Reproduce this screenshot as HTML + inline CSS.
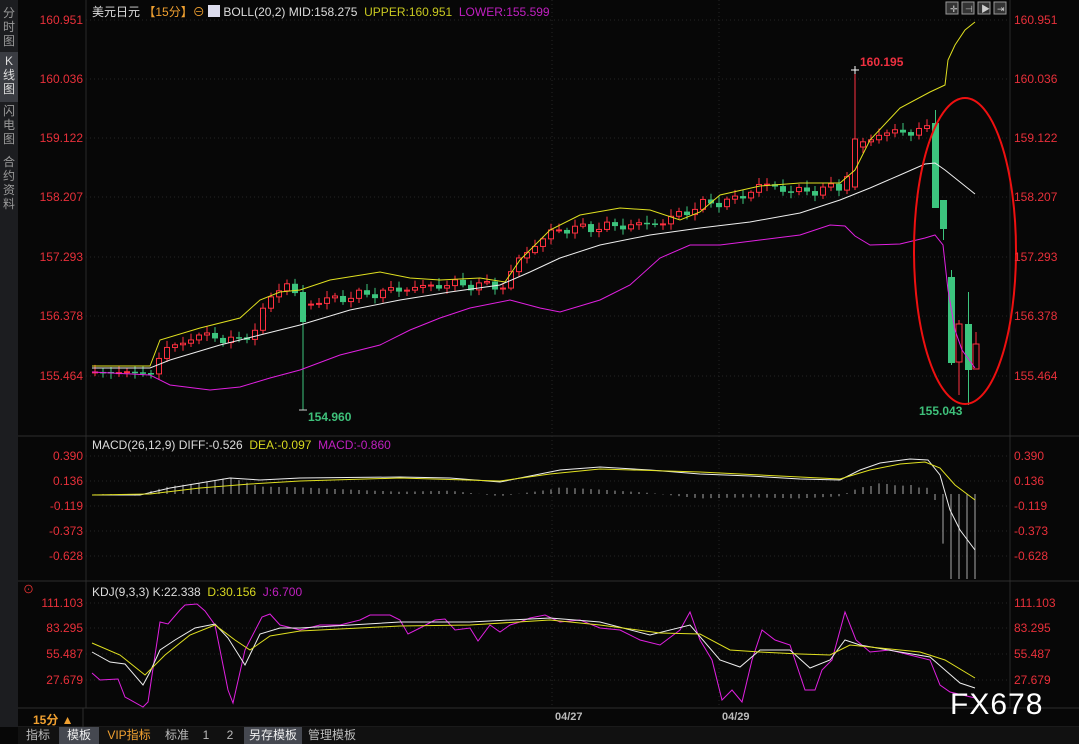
<!DOCTYPE html>
<html><head><meta charset="utf-8"><style>
html,body{margin:0;padding:0;background:#070707;width:1079px;height:744px;overflow:hidden;font-family:"Liberation Sans","Noto Sans CJK SC",sans-serif}
#wrap{position:relative;width:1079px;height:744px}
.side{position:absolute;left:0;top:0;width:18px;height:727px;background:#1c1d20}
.vt{position:absolute;left:0;width:18px;color:#9a9a9a;font-size:12px;line-height:14px;text-align:center}
.lab{position:absolute;font-size:12px;color:#e8303a}
.lab.l{right:996px;text-align:right}
.lab.r{left:1014px}
.t{position:absolute;font-size:12px;white-space:nowrap}
.tabs{position:absolute;left:18px;top:727px;height:17px;width:1061px;background:#111}
.tab{position:absolute;top:0;height:17px;font-size:12px;line-height:17px;color:#bbb;text-align:center}
</style></head><body><div id="wrap">
<svg id="s" width="1079" height="744" style="position:absolute;left:0;top:0"></svg>
<div class="side"></div>
<div class="vt" style="top:6px">分<br>时<br>图</div>
<div class="vt" style="top:52px;background:#3a3c42;color:#ddd;height:48px;padding-top:2px">K<br>线<br>图</div>
<div class="vt" style="top:104px">闪<br>电<br>图</div>
<div class="vt" style="top:155px">合<br>约<br>资<br>料</div>

<div class="t" style="left:92px;top:3px;color:#ddd">美元日元 <span style="color:#f0a030">【15分】</span><span style="color:#f0a030">⊖</span> <span style="display:inline-block;width:12px;height:12px;background:#dde;vertical-align:-1px"></span> BOLL(20,2) MID:158.275 &nbsp;<span style="color:#c8c820">UPPER:160.951</span> &nbsp;<span style="color:#c020c0">LOWER:155.599</span></div>
<div class="t" style="left:92px;top:438px;color:#ddd">MACD(26,12,9) DIFF:-0.526 &nbsp;<span style="color:#d8d820">DEA:-0.097</span> &nbsp;<span style="color:#c020c0">MACD:-0.860</span></div>
<div class="t" style="left:92px;top:585px;color:#ddd">KDJ(9,3,3) K:22.338 &nbsp;<span style="color:#d8d820">D:30.156</span> &nbsp;<span style="color:#c020c0">J:6.700</span></div>
<div class="t" style="left:23px;top:581px;color:#e33;font-size:11px">⊙</div>

<div class="t" style="left:860px;top:55px;color:#ee3040;font-weight:bold">160.195</div>
<div class="t" style="left:308px;top:410px;color:#3ec07a;font-weight:bold">154.960</div>
<div class="t" style="left:919px;top:404px;color:#3ec07a;font-weight:bold">155.043</div>

<div class="t" style="left:555px;top:711px;color:#bbb;font-weight:bold;font-size:11px">04/27</div>
<div class="t" style="left:722px;top:711px;color:#bbb;font-weight:bold;font-size:11px">04/29</div>
<div class="t" style="left:33px;top:711px;color:#f0a030;font-weight:bold">15分 ▲</div>
<div class="t" style="left:950px;top:688px;color:#fff;font-size:30px;letter-spacing:1px">FX678</div>

<div class="tabs">
<div class="tab" style="left:0;width:40px">指标</div>
<div class="tab" style="left:41px;width:40px;background:#454850;color:#eee">模板</div>
<div class="tab" style="left:82px;width:58px;color:#f0a030">VIP指标</div>
<div class="tab" style="left:141px;width:36px">标准</div>
<div class="tab" style="left:178px;width:20px">1</div>
<div class="tab" style="left:199px;width:26px">2</div>
<div class="tab" style="left:226px;width:58px;background:#454850;color:#eee">另存模板</div>
<div class="tab" style="left:285px;width:58px">管理模板</div>
</div>
<div id="labs"></div>
</div>
<script>
var S=document.getElementById('s'),h='';
function L(a,c,w,d){h+='<polyline fill="none" stroke="'+c+'" stroke-width="'+(w||1)+'"'+(d?' stroke-dasharray="'+d+'"':'')+' points="'+a.map(p=>p.join(',')).join(' ')+'"/>';}
function R(x,y,w,hh,f,s){h+='<rect x="'+x+'" y="'+y+'" width="'+w+'" height="'+hh+'" fill="'+f+'"'+(s?' stroke="'+s+'"':'')+'/>';}
R(86,0,924,727,'#070707');
L([[86,0],[86,708]],'#2a2a2a');L([[1010,0],[1010,708]],'#2a2a2a');
L([[18,436],[1079,436]],'#2e2e2e');L([[18,581],[1079,581]],'#2e2e2e');L([[18,708],[1079,708]],'#2e2e2e');L([[18,727],[1079,727]],'#2e2e2e');
L([[83,708],[83,727]],'#2e2e2e');
var labs='',mains=[[160.951,20],[160.036,79],[159.122,138],[158.207,197],[157.293,257],[156.378,316],[155.464,376]];
mains.forEach(m=>{L([[86,m[1]],[1010,m[1]]],'#262626',1,'1,3');labs+='<div class="lab l" style="top:'+(m[1]-7)+'px">'+m[0].toFixed(3)+'</div><div class="lab r" style="top:'+(m[1]-7)+'px">'+m[0].toFixed(3)+'</div>';});
[[0.390,456],[0.136,481],[-0.119,506],[-0.373,531],[-0.628,556]].forEach(m=>{L([[86,m[1]],[1010,m[1]]],'#262626',1,'1,3');labs+='<div class="lab l" style="top:'+(m[1]-7)+'px">'+m[0].toFixed(3)+'</div><div class="lab r" style="top:'+(m[1]-7)+'px">'+m[0].toFixed(3)+'</div>';});
[[111.103,603],[83.295,628],[55.487,654],[27.679,680]].forEach(m=>{L([[86,m[1]],[1010,m[1]]],'#262626',1,'1,3');labs+='<div class="lab l" style="top:'+(m[1]-7)+'px">'+m[0].toFixed(3)+'</div><div class="lab r" style="top:'+(m[1]-7)+'px">'+m[0].toFixed(3)+'</div>';});
[552,719].forEach(x=>L([[x,0],[x,708]],'#262626',1,'1,3'));
document.getElementById('labs').innerHTML=labs;
var Y=p=>20+(160.951-p)*64.88;
var kf=[[92,155.52],[150,155.52],[158,155.75],[170,155.9],[200,156.1],[240,156.0],[255,156.2],[275,156.8],[290,156.9],[300,156.55],[320,156.62],[400,156.8],[450,156.88],[505,156.85],[520,157.3],[555,157.72],[600,157.76],[660,157.82],[700,158.1],[740,158.2],[760,158.42],[800,158.3],[840,158.38],[848,158.6],[856,159.0],[880,159.2],[928,159.26]];
function I(x){for(var i=1;i<kf.length;i++)if(x<=kf[i][0]){var a=kf[i-1],b=kf[i];return a[1]+(b[1]-a[1])*(x-a[0])/(b[0]-a[0]);}return kf[kf.length-1][1];}
var prev=I(92),G='#3cc57e',RD='#ff3040';
for(var x=95;x<=927;x+=8){
 var c=I(x)+0.05*Math.sin(x*1.37)+0.03*Math.sin(x*0.53);
 if(x<150)c=155.52+0.01*Math.sin(x);
 var o=prev,up=c>=o,t=Math.min(Y(o),Y(c)),b=Math.max(Y(o),Y(c));if(b-t<1)b=t+1;
 var hi=t-2-Math.abs(Math.sin(x*2.1))*5,lo=b+2+Math.abs(Math.cos(x*1.7))*4;
 var col=up?RD:G;
 L([[x,hi],[x,lo]],col);
 if(up){R(x-2.5,t,5,b-t,'#070707',col);}else R(x-3,t,6,b-t+0.5,col);
 prev=c;
}
L([[303,285],[303,410]],G);R(300,292,6,30,G);L([[299,410],[307,410]],'#ccc');
L([[855,70],[855,190]],RD);R(852.5,139,5,48,'#070707',RD);L([[851,70],[859,70]],'#fff');L([[855,66],[855,74]],'#fff');
[[935.5,110,123,208,208,G],[943.5,200,200,229,240,G],[951.5,270,277,363,365,G],[959,320,324,362,395,RD],[968.5,292,324,370,405,G],[976,332,344,369,369,RD]].forEach(k=>{L([[k[0],k[1]],[k[0],k[4]]],k[5]);if(k[5]==G)R(k[0]-3.5,k[2],7,k[3]-k[2],G);else R(k[0]-3,k[2],6,k[3]-k[2],'#070707',RD);});
L([[92,366],[150,366],[160,340],[200,328],[240,318],[260,300],[280,292],[300,290],[330,280],[380,272],[410,278],[440,280],[480,278],[505,282],[520,260],[550,230],[580,215],[620,208],[650,210],[680,220],[700,212],[720,195],[760,186],[800,183],[840,183],[855,170],[870,140],[900,108],[930,92],[945,85],[948,60],[955,45],[965,30],[975,22]],'#e0e020');
L([[92,368],[150,368],[170,360],[220,345],[260,335],[300,325],[350,310],[400,300],[450,292],[500,285],[530,272],[560,258],[600,245],[650,235],[700,228],[750,222],[800,213],[840,200],[870,188],[900,175],[925,164],[935,163],[945,170],[960,182],[975,194]],'#eee');
L([[92,372],[150,375],[170,385],[210,390],[240,387],[270,378],[300,370],[340,355],[380,345],[410,330],[440,318],[470,308],[510,300],[540,308],[560,312],[600,300],[630,285],[660,258],[690,245],[720,245],[760,240],[800,235],[830,225],[845,226],[855,236],[870,245],[900,244],[925,238],[935,235],[943,245],[948,290],[955,330],[962,350],[975,368]],'#e020e0');
h+='<ellipse cx="965" cy="251" rx="51" ry="153" fill="none" stroke="#ee1010" stroke-width="2"/>';
var dif=[[92,495],[140,495],[170,488],[200,483],[230,478],[260,480],[300,478],[400,477],[450,478],[500,482],[520,478],[560,470],[600,467],[650,470],[700,474],[750,476],[800,479],[840,480],[860,470],[880,463],[910,459],[928,460],[940,475],[950,510],[960,530],[975,550]];
var dea=[[92,495],[150,494],[200,488],[250,484],[300,481],[400,478],[500,481],[550,474],[600,469],[700,472],[800,477],[840,479],[870,470],[900,464],[925,462],[940,468],[955,485],[975,500]];
function P(a,x){for(var i=1;i<a.length;i++)if(x<=a[i][0]){var p=a[i-1],q=a[i];return p[1]+(q[1]-p[1])*(x-p[0])/(q[0]-p[0]);}return a[a.length-1][1];}
for(var x=95;x<=975;x+=8){var v=(P(dif,x)-P(dea,x))*2.2;if(x>940)v*=1.6;var e=Math.min(579,494+v);L([[x,494],[x,e]],'#aaa');}
L(dif,'#eee');L(dea,'#e0e020');
L([[92,673],[100,680],[118,679],[125,697],[143,707],[148,702],[160,622],[168,624],[180,610],[185,605],[197,604],[205,611],[215,625],[228,690],[233,703],[245,650],[262,617],[270,614],[280,625],[300,630],[320,625],[340,625],[360,620],[370,615],[390,615],[400,620],[408,634],[420,628],[435,620],[445,619],[455,630],[470,628],[478,641],[490,625],[500,632],[510,625],[520,622],[530,618],[545,615],[560,622],[580,620],[600,628],[620,630],[640,640],[660,645],[680,630],[690,612],[700,640],[712,660],[722,700],[732,690],[742,702],[752,660],[762,630],[775,640],[790,645],[805,690],[815,690],[822,670],[832,660],[845,612],[856,640],[870,652],[890,650],[910,655],[930,660],[940,685],[950,692],[975,698]],'#e020e0');
L([[92,652],[110,662],[125,664],[143,685],[150,672],[160,650],[175,640],[195,628],[215,624],[228,638],[245,665],[260,634],[280,628],[300,628],[400,622],[470,622],[550,618],[600,622],[650,635],[690,625],[720,660],[740,667],[760,650],[790,650],[810,668],[830,660],[845,640],[860,645],[900,652],[930,657],[945,670],[960,683],[975,688]],'#eee');
L([[92,643],[120,655],[145,675],[165,655],[190,635],[215,625],[235,640],[250,650],[270,636],[300,631],[400,626],[470,625],[550,620],[600,625],[660,633],[700,634],[730,650],[760,652],[800,654],[830,655],[850,645],[880,648],[920,652],[945,660],[975,678]],'#e0e020');
[947,963,979,995].forEach(x=>{R(x-1,2,12,12,'#333','#999');});
h+='<text x="950" y="12" fill="#ccc" font-size="9">✛</text><text x="965" y="12" fill="#ccc" font-size="9">⊣</text><text x="981" y="12" fill="#ccc" font-size="9">▶</text><text x="997" y="12" fill="#ccc" font-size="9">⇥</text>';
S.innerHTML=h;
</script>
</body></html>
